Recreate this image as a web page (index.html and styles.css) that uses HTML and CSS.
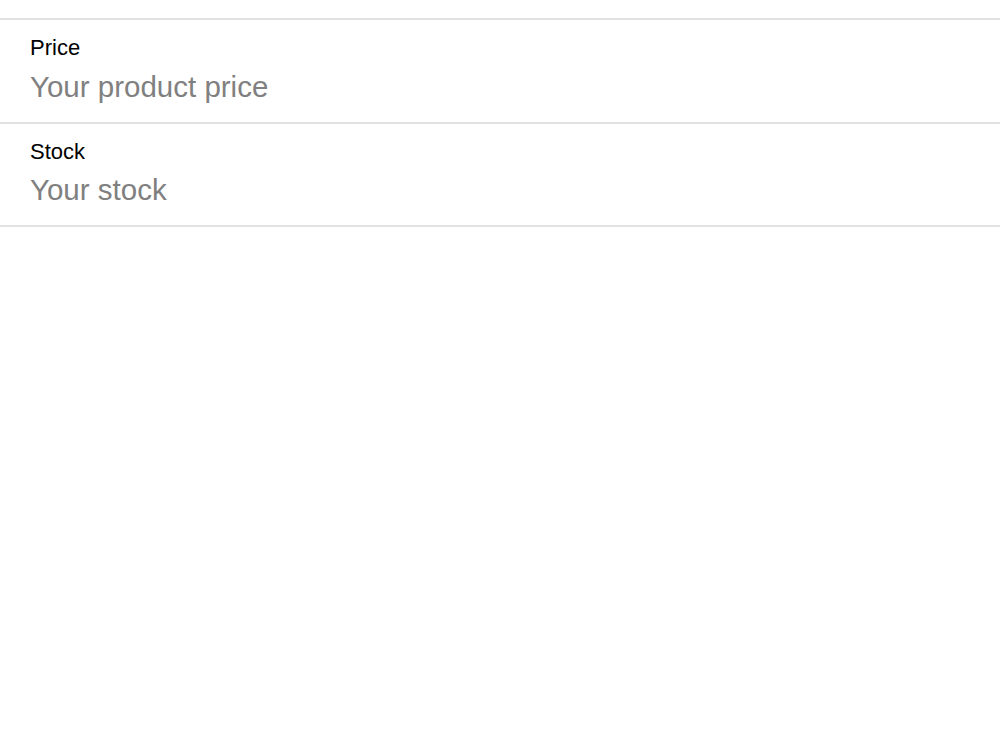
FILE: index.html
```html
<!DOCTYPE html>
<html lang="en">
<head>
<meta charset="utf-8">
<title>Product form</title>
<link rel="stylesheet" href="styles.css">
</head>
<body>
<form class="form">
  <label class="field">
    <span class="field-label">Category</span>
    <input class="field-input" type="text" placeholder="Select category">
  </label>
  <label class="field">
    <span class="field-label">Price</span>
    <input class="field-input" type="text" placeholder="Your product price">
  </label>
  <label class="field">
    <span class="field-label">Stock</span>
    <input class="field-input" type="text" placeholder="Your stock">
  </label>
</form>
</body>
</html>
```

FILE: styles.css
```css
html, body {
  margin: 0;
  padding: 0;
  background: #ffffff;
}

body {
  font-family: "Liberation Sans", Arial, sans-serif;
  width: 1000px;
  height: 750px;
  overflow: hidden;
}

.form {
  display: flex;
  flex-direction: column;
  margin-top: -83.5px;
}

.field {
  display: flex;
  flex-direction: column;
  gap: 9.5px;
  padding: 15px 30px 19px 30px;
  border-bottom: 2px solid #e2e2e2;
}

.field-label {
  font-size: 22px;
  line-height: 25px;
  color: #000000;
}

.field-input {
  font-family: "Liberation Sans", Arial, sans-serif;
  font-size: 29.5px;
  line-height: 33px;
  height: 33px;
  padding: 0;
  margin: 0;
  border: none;
  outline: none;
  background: transparent;
  color: #000000;
  width: 100%;
}

.field-input::placeholder {
  color: #808080;
  opacity: 1;
}
```
